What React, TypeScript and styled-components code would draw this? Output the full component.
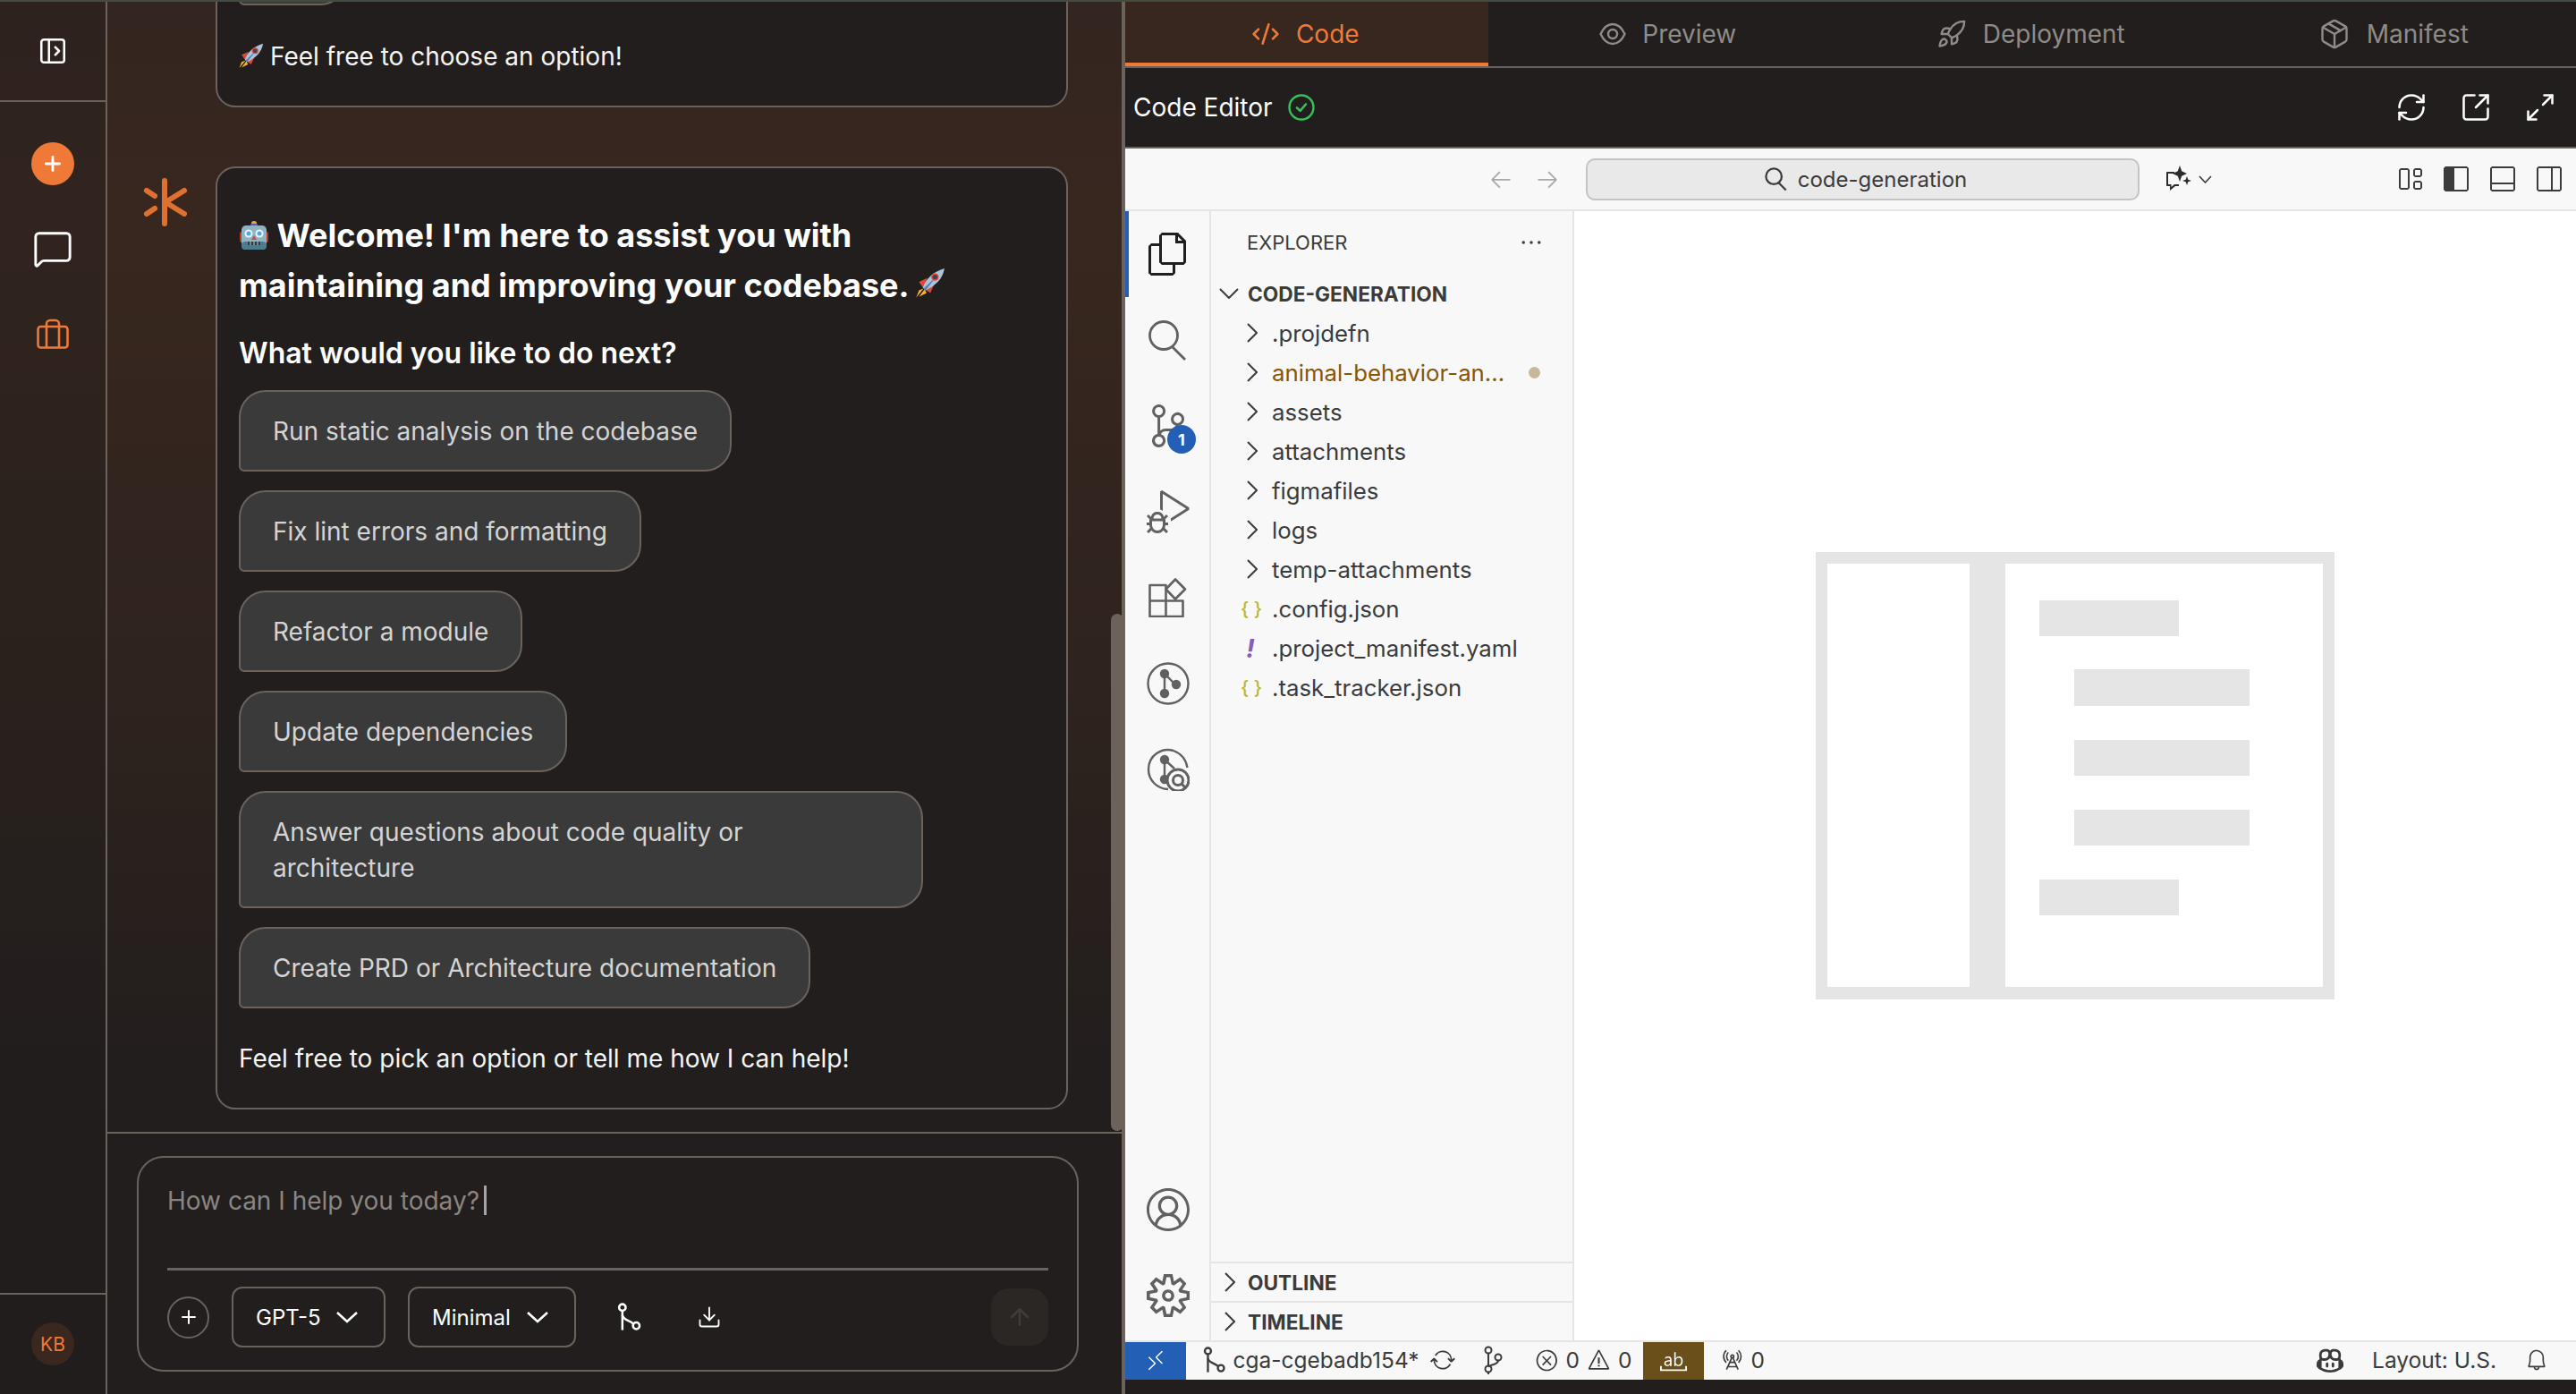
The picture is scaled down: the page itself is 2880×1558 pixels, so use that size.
import React from 'react'
import styled, { createGlobalStyle } from 'styled-components'
import {
  Download,
  Maximize2,
  MessageSquare,
  PanelLeftOpen,
  Plus,
  RefreshCw,
  Rocket,
  Package,
  CodeXml,
  SquareArrowOutUpRight,
  ArrowUp,
} from 'lucide-react'
import {
  VscAccount,
  VscArrowLeft,
  VscArrowRight,
  VscBell,
  VscCopilot,
  VscDebugAlt,
  VscEllipsis,
  VscError,
  VscFiles,
  VscLayout,
  VscLayoutPanelOff,
  VscLayoutSidebarLeft,
  VscLayoutSidebarRightOff,
  VscRadioTower,
  VscRemote,
  VscSettingsGear,
  VscSourceControl,
  VscSync,
  VscWarning,
  VscWholeWord,
} from 'react-icons/vsc'

const LINE = '#6b625c'
const DARK = '#211e1d'
const ORANGE = '#ef7a38'

const GlobalStyle = createGlobalStyle`
  html, body {
    margin: 0;
    padding: 0;
    background: ${DARK};
  }
  * {
    box-sizing: border-box;
  }
  body {
    font-family: Inter, "Liberation Sans", sans-serif;
  }
`

const Page = styled.div`
  width: 2880px;
  height: 1558px;
  display: flex;
  flex-direction: column;
  overflow: hidden;
  border-top: 2px solid #444c42;
`

const Body = styled.div`
  flex: 1;
  min-height: 0;
  display: flex;
  background: linear-gradient(180deg, #33251f 0%, #38271f 15%, #2e231e 50%, #251f1d 70%, ${DARK} 80%);
`

/* left rail */
const Rail = styled.nav`
  width: 120px;
  flex-shrink: 0;
  display: flex;
  flex-direction: column;
  border-right: 2px solid ${LINE};
  background: rgba(33, 30, 29, 0.3);
`

const RailTop = styled.div`
  height: 112px;
  flex-shrink: 0;
  display: flex;
  align-items: center;
  justify-content: center;
  border-bottom: 2px solid ${LINE};
  color: #fff;
`

const RailNav = styled.div`
  flex: 1;
  display: flex;
  flex-direction: column;
  align-items: center;
  padding-top: 21px;
  color: #fff;
`

const RailSlot = styled.div`
  height: 95px;
  flex-shrink: 0;
  display: flex;
  align-items: center;
  justify-content: center;
`

const NewButton = styled.div`
  width: 48px;
  height: 48px;
  border-radius: 50%;
  background: ${ORANGE};
  color: #fff;
  display: flex;
  align-items: center;
  justify-content: center;
`

const RailBottom = styled.div`
  height: 113px;
  flex-shrink: 0;
  display: flex;
  justify-content: center;
  padding-top: 31px;
  border-top: 2px solid ${LINE};
`

const Initials = styled.div`
  width: 48px;
  height: 48px;
  border-radius: 50%;
  background: #3a271e;
  color: ${ORANGE};
  font-size: 21px;
  display: flex;
  align-items: center;
  justify-content: center;
`

/* chat column */
const Chat = styled.section`
  width: 1138px;
  flex-shrink: 0;
  display: flex;
  flex-direction: column;
  border-right: 4px solid ${LINE};
  position: relative;
`

const Thumb = styled.div`
  position: absolute;
  right: -2px;
  top: 684px;
  width: 14px;
  height: 578px;
  border-radius: 7px;
  background: ${LINE};
`

const Messages = styled.div`
  height: 1263px;
  flex-shrink: 0;
  overflow: hidden;
  display: flex;
  flex-direction: column;
  justify-content: flex-end;
  gap: 66px;
  padding: 0 60px 25px 121px;
`

const Message = styled.article`
  position: relative;
  flex-shrink: 0;
  background: ${DARK};
  border: 2px solid ${LINE};
  border-radius: 22px;
  padding: 33px 24px;
  display: flex;
  flex-direction: column;
  align-items: flex-start;
`

const Spark = styled.svg`
  position: absolute;
  left: -83px;
  top: 10px;
  width: 52px;
  height: 56px;
`

const Heading = styled.h2`
  margin: 14px 0 26px;
  font-size: 36px;
  line-height: 56px;
  font-weight: 700;
  color: #fff;
`

const Question = styled.h3`
  margin: 0 0 19px;
  font-size: 32px;
  line-height: 44px;
  font-weight: 600;
  color: #fff;
`

const Plain = styled.p<{ $top?: number }>`
  margin: ${(p) => p.$top ?? 0}px 0 0;
  font-size: 28px;
  line-height: 44px;
  color: #f5f5f5;
  display: flex;
  align-items: center;
  gap: 7px;
`

const Emoji = styled.svg`
  vertical-align: -4px;
  flex-shrink: 0;
`

const LeadingEmoji = styled.span`
  display: flex;
  margin-left: -4px;
`

const TrailingEmoji = styled.span`
  margin-left: -5px;
`

const Options = styled.div`
  display: flex;
  flex-direction: column;
  align-items: flex-start;
  gap: 21px;
`

const Option = styled.button`
  display: block;
  max-width: 765px;
  min-height: 91px;
  padding: 23.5px 36px;
  border: 2px solid ${LINE};
  border-radius: 30px 30px 30px 6px;
  background: #3a3a3a;
  color: #d4d4d4;
  font-family: inherit;
  font-size: 28px;
  line-height: 40px;
  text-align: left;
`

const ClippedOption = styled(Option)`
  width: 121px;
  margin-bottom: 35px;
`

const Composer = styled.div`
  flex: 1;
  border-top: 2px solid ${LINE};
  padding: 25px 48px 0 33px;
`

const ComposerBox = styled.div`
  height: 241px;
  border: 2px solid ${LINE};
  border-radius: 30px;
  padding: 0 32px;
  display: flex;
  flex-direction: column;
`

const Prompt = styled.div`
  height: 126px;
  flex-shrink: 0;
  padding-top: 26px;
  border-bottom: 3px solid ${LINE};
  display: flex;
  align-items: flex-start;
  font-size: 28px;
  line-height: 44px;
  color: #8b8581;
`

const Caret = styled.span`
  width: 3px;
  height: 33px;
  margin: 5px 0 0 5px;
  background: #a5a5a5;
`

const ComposerBar = styled.div`
  flex: 1;
  display: flex;
  align-items: center;
  padding-bottom: 7px;
`

const RoundAdd = styled.div`
  width: 47px;
  height: 47px;
  border-radius: 50%;
  border: 2px solid ${LINE};
  color: #fff;
  display: flex;
  align-items: center;
  justify-content: center;
  margin-right: 25px;
`

const Picker = styled.div<{ $width: number }>`
  width: ${(p) => p.$width}px;
  height: 68px;
  border: 2px solid ${LINE};
  border-radius: 12px;
  display: flex;
  align-items: center;
  justify-content: space-between;
  padding: 0 28px 0 25px;
  margin-right: 25px;
  color: #fff;
  font-size: 24px;
`

const BarIcon = styled.div`
  width: 28px;
  height: 32px;
  color: #fff;
  margin: 0 40px 0 21px;
  display: flex;
  align-items: center;
  justify-content: center;
  flex-shrink: 0;
`

const Send = styled.div`
  margin-left: auto;
  width: 64px;
  height: 64px;
  border-radius: 20px;
  background: #2a2725;
  color: #3f3c3a;
  display: flex;
  align-items: center;
  justify-content: center;
`

/* right side */
const Workspace = styled.main`
  flex: 1;
  min-width: 0;
  display: flex;
  flex-direction: column;
  background: ${DARK};
`

const Tabs = styled.div`
  height: 74px;
  flex-shrink: 0;
  display: grid;
  grid-template-columns: repeat(4, 1fr);
  border-bottom: 2px solid ${LINE};
`

const Tab = styled.div<{ $active?: boolean }>`
  display: flex;
  align-items: center;
  justify-content: center;
  gap: 18px;
  font-size: 28px;
  padding: 4px 3px 0 0;
  color: ${(p) => (p.$active ? ORANGE : '#8f8b88')};
  background: ${(p) => (p.$active ? '#38271f' : 'transparent')};
  border-bottom: 4px solid ${(p) => (p.$active ? ORANGE : 'transparent')};
`

const EditorBar = styled.div`
  height: 90px;
  flex-shrink: 0;
  display: flex;
  align-items: center;
  gap: 17px;
  padding: 0 22px 0 9px;
  border-bottom: 2px solid ${LINE};
  color: #fff;
  font-size: 28px;
`

const EditorActions = styled.div`
  margin-left: auto;
  display: flex;
  align-items: center;
  gap: 36px;
`

const Ide = styled.div`
  height: 1376px;
  flex-shrink: 0;
  display: flex;
  flex-direction: column;
  background: #fff;
  color: #3b3b3b;
  font-size: 24.5px;
`

const TitleBar = styled.div`
  height: 70px;
  flex-shrink: 0;
  background: #f8f8f8;
  border-bottom: 2px solid #e5e5e5;
  display: flex;
  align-items: center;
  color: #a8a8a8;
  padding-left: 406px;
`

const NavArrows = styled.div`
  display: flex;
  gap: 24px;
  margin-right: 29px;
`

const CommandCenter = styled.div`
  width: 619px;
  height: 47px;
  background: #e9e9e9;
  border: 2px solid #c4c4c4;
  border-radius: 10px;
  padding-left: 7px;
  display: flex;
  align-items: center;
  justify-content: center;
  gap: 11px;
  color: #3b3b3b;
  font-size: 24px;
`

const CopilotMenu = styled.div`
  display: flex;
  align-items: center;
  gap: 8px;
  margin-left: 28px;
  color: #3b3b3b;
`

const LayoutIcons = styled.div`
  display: flex;
  margin-left: auto;
  margin-right: 14px;
  gap: 20px;
  color: #3b3b3b;
`

const IdeBody = styled.div`
  flex: 1;
  min-height: 0;
  display: flex;
`

const Activity = styled.div`
  width: 96px;
  flex-shrink: 0;
  background: #f8f8f8;
  border-right: 2px solid #e5e5e5;
  display: flex;
  flex-direction: column;
  color: #616161;
`

const ActivityItem = styled.div<{ $active?: boolean }>`
  position: relative;
  height: 96px;
  flex-shrink: 0;
  display: flex;
  align-items: center;
  justify-content: center;
  padding-right: 2px;
  color: ${(p) => (p.$active ? '#1f1f1f' : '#616161')};
  border-left: 4px solid ${(p) => (p.$active ? '#2360b5' : 'transparent')};
`

const ActivityFooter = styled.div`
  margin-top: auto;
  padding-bottom: 2px;
`

const Badge = styled.span`
  position: absolute;
  left: 43px;
  top: 47px;
  width: 32px;
  height: 32px;
  border-radius: 50%;
  background: #2360b5;
  color: #fff;
  font-size: 18px;
  font-weight: 700;
  display: flex;
  align-items: center;
  justify-content: center;
`

const Explorer = styled.aside`
  width: 406px;
  flex-shrink: 0;
  background: #f8f8f8;
  border-right: 2px solid #e5e5e5;
  display: flex;
  flex-direction: column;
`

const ExplorerHead = styled.div`
  height: 70px;
  flex-shrink: 0;
  display: flex;
  align-items: center;
  justify-content: space-between;
  padding: 0 32px 0 40px;
  font-size: 22px;
`

const Section = styled.div`
  height: 44px;
  flex-shrink: 0;
  display: flex;
  align-items: center;
  padding-left: 9px;
  gap: 10px;
  font-size: 22.7px;
  font-weight: 700;
`

const Tree = styled.div`
  flex: 1;
  min-height: 0;
`

const TreeRow = styled.div<{ $changed?: boolean }>`
  height: 44px;
  display: flex;
  align-items: center;
  padding-left: 32px;
  gap: 8px;
  font-size: 25.8px;
  color: ${(p) => (p.$changed ? '#895503' : '#3b3b3b')};
`

const RowMark = styled.span`
  width: 28px;
  flex-shrink: 0;
  display: flex;
  align-items: center;
  justify-content: center;
`

const FileMark = styled(RowMark)`
  justify-content: flex-start;
  padding-left: 1px;
`

const Curly = styled.span`
  font-size: 21px;
  font-weight: 500;
  color: #b7b73b;
  white-space: nowrap;
`

const Bang = styled.span`
  margin-left: 6px;
  font-size: 29px;
  font-style: italic;
  font-weight: 700;
  color: #8a5db8;
`

const ChangeDot = styled.span`
  width: 13px;
  height: 13px;
  border-radius: 50%;
  background: #c9b79c;
  margin-left: auto;
  margin-right: 36px;
`

const Collapsed = styled(Section)`
  border-top: 2px solid #e5e5e5;
  gap: 14px;
  padding-left: 15px;
`

const EditorArea = styled.div`
  flex: 1;
  background: #fff;
  display: flex;
  align-items: center;
  justify-content: center;
`

const StatusBar = styled.div`
  height: 44px;
  flex-shrink: 0;
  display: flex;
  background: #f8f8f8;
  border-top: 2px solid #e5e5e5;
`

const RemoteTag = styled.div`
  width: 68px;
  flex-shrink: 0;
  background: #2360b5;
  color: #fff;
  display: flex;
  align-items: center;
  justify-content: center;
`

const StatusItem = styled.div<{ $left: number; $gap?: number }>`
  margin-left: ${(p) => p.$left}px;
  padding-bottom: 2px;
  display: flex;
  align-items: center;
  gap: ${(p) => p.$gap ?? 8}px;
`

const SyncMark = styled.span`
  display: flex;
  margin-left: 4px;
`

const WordTag = styled.div`
  width: 68px;
  margin-left: 13px;
  background: #6b4f1a;
  color: #fff;
  display: flex;
  align-items: center;
  justify-content: center;
`

const StatusRight = styled.div`
  margin-left: auto;
  padding-bottom: 2px;
  display: flex;
  align-items: center;
  gap: 32px;
  padding-right: 31px;
`

const folders = ['.projdefn', 'animal-behavior-an...', 'assets', 'attachments', 'figmafiles', 'logs', 'temp-attachments']

const options = [
  'Run static analysis on the codebase',
  'Fix lint errors and formatting',
  'Refactor a module',
  'Update dependencies',
  'Answer questions about code quality or architecture',
  'Create PRD or Architecture documentation',
]

const RocketEmoji = ({ size }: { size: number }) => (
  <Emoji width={size} height={size} viewBox="0 0 36 36">
    <path d="M8 16 L17 12 L12 22 Z" fill="#dd4a32" />
    <path d="M20 28 L24 19 L14 24 Z" fill="#dd4a32" />
    <path d="M13 23 L5 33 L8 25 Z M14 24 L8 32 L16 28 Z" fill="#f5b52e" />
    <path d="M12 22 C16 12 24 5 35 2 C33 13 26 20 15 25 Z" fill="#a9c4de" />
    <path d="M13 23 L27 10 L15 25 Z" fill="#5b7fb0" />
    <circle cx="25" cy="11" r="4" fill="#dd4a32" />
    <circle cx="25" cy="11" r="2.5" fill="#38465a" />
  </Emoji>
)

const RobotEmoji = () => (
  <Emoji width={34} height={34} viewBox="0 0 34 34">
    <rect x="14" y="1" width="6" height="5" rx="2.5" fill="#e3a934" />
    <rect x="13" y="4" width="8" height="3" rx="1" fill="#6d53a8" />
    <rect x="1" y="13" width="4" height="12" rx="2" fill="#b5362f" />
    <rect x="29" y="13" width="4" height="12" rx="2" fill="#b5362f" />
    <rect x="3" y="6" width="28" height="27" rx="5" fill="#8db4c0" />
    <rect x="3" y="24" width="28" height="9" rx="4" fill="#4e7c8c" />
    <circle cx="11" cy="15" r="4.5" fill="#e6f4fa" />
    <circle cx="23" cy="15" r="4.5" fill="#e6f4fa" />
    <circle cx="11" cy="15" r="2.5" fill="#5aa7d6" />
    <circle cx="23" cy="15" r="2.5" fill="#5aa7d6" />
    <path d="M17 17 L20 22 L14 22 Z" fill="#cf4a3f" />
    <rect x="10" y="24" width="14" height="4" rx="1" fill="#2d3a3f" />
    <path d="M13 24v4M17 24v4M21 24v4" stroke="#c8d4d8" strokeWidth="1" />
  </Emoji>
)

const SparkLogo = () => (
  <Spark viewBox="0 0 52 56" fill="none" stroke="#de7030" strokeWidth="6" strokeLinecap="round">
    <path d="M24 4 V52" />
    <path d="M25 28 L46 15" />
    <path d="M25 28 L46 41" />
    <path d="M4 15 L13 21" />
    <path d="M4 41 L13 35" />
  </Spark>
)

const Briefcase = () => (
  <svg width="36" height="34" viewBox="0 0 36 34" fill="none" stroke={ORANGE} strokeWidth="2.6" strokeLinejoin="round">
    <rect x="1.5" y="9" width="33" height="23.5" rx="3" />
    <path d="M11 32V6a4 4 0 0 1 4-4h6a4 4 0 0 1 4 4v26" />
  </svg>
)

const EyeRing = () => (
  <svg width="30" height="26" viewBox="0 0 30 26" fill="none" stroke="#8f8b88" strokeWidth="2.4">
    <path d="M1.5 13C5 5.5 10 2 15 2s10 3.500 13.500 11C25 20.500 20 24 15 24S5 20.500 1.500 13Z" />
    <circle cx="15" cy="13" r="5" />
  </svg>
)

const SavedCheck = () => (
  <svg width="30" height="30" viewBox="0 0 30 30" fill="none" stroke="#35c15b">
    <circle cx="15" cy="15" r="13.5" strokeWidth="2.4" />
    <path d="M10 15.5l3.600 3.400L20 11.500" strokeWidth="2.600" strokeLinecap="round" strokeLinejoin="round" />
  </svg>
)

const ChatSparkle = () => (
  <svg width="30" height="30" viewBox="0 0 30 30" fill="#2b2b2b">
    <path d="M11 7H3a1 1 0 0 0-1 1v14a1 1 0 0 0 1 1h3v5l6-5h4v-2h-5l-3.500 3v-3H4V9h7Z" />
    <path d="M17 0l2.200 6.300L25 9l-5.800 2.700L17 18l-2.200-6.300L9 9l5.800-2.700Z" />
    <path d="M25 12l1.300 3.700L30 17l-3.700 1.300L25 22l-1.300-3.700L20 17l3.700-1.300Z" />
  </svg>
)

const Glass = ({ size }: { size: number }) => (
  <svg width={size} height={size} viewBox="0 0 46 46" fill="none" stroke="currentColor" strokeWidth={size > 30 ? 2.8 : 4}>
    <circle cx="18" cy="18" r="15.500" />
    <path d="M28 31 L42 45" />
  </svg>
)

const ExtensionBlocks = () => (
  <svg width="44" height="44" viewBox="0 0 44 44" fill="none" stroke="currentColor" strokeWidth="2.600" strokeLinejoin="round">
    <path d="M1.500 8H19.500V43H1.500Z" />
    <path d="M1.500 25.500H38.500V43H19.500" />
    <path d="M30 1.500L41 12.500L30 23.500L19.500 12.500Z" />
  </svg>
)

const Chevron = ({ down }: { down?: boolean }) => (
  <svg
    width={down ? 22 : 12}
    height={down ? 12 : 22}
    viewBox={down ? '0 0 22 12' : '0 0 12 22'}
    fill="none"
    stroke="#3b3b3b"
    strokeWidth="2"
  >
    <path d={down ? 'M1 1L11 11L21 1' : 'M1 1L11 11L1 21'} />
  </svg>
)

const PickerChevron = () => (
  <svg width="26" height="14" viewBox="0 0 26 14" fill="none" stroke="#fff" strokeWidth="2.600">
    <path d="M2 2L13 12L24 2" />
  </svg>
)

const PullRequests = () => (
  <svg width="48" height="48" viewBox="0 0 48 48" fill="none" stroke="#616161" strokeWidth="2.400">
    <circle cx="24" cy="24" r="22.500" />
    <path d="M20 13v22M20 13l11 11" />
    <circle cx="20" cy="13" r="4" fill="#616161" />
    <circle cx="20" cy="35" r="4" fill="#616161" />
    <circle cx="33" cy="25" r="4" fill="#616161" />
  </svg>
)

const GitLens = () => (
  <svg width="48" height="48" viewBox="0 0 48 48" fill="none" stroke="#616161" strokeWidth="2.400">
    <path d="M30 3C17 -1 2 8 2 24c0 12 10 22 22 22" />
    <path d="M30 3c8 3 14 10 15.500 19" />
    <path d="M20 13v22M20 13l11 10" />
    <circle cx="20" cy="13" r="4" fill="#616161" />
    <circle cx="20" cy="35" r="4" fill="#616161" />
    <circle cx="35" cy="36" r="12" fill="#f8f8f8" stroke="#616161" strokeWidth="3" />
    <circle cx="35" cy="36" r="5.500" strokeWidth="3" />
    <path d="M39 40l5 5" strokeWidth="3" />
  </svg>
)

const BranchTrail = ({ color, size }: { color: string; size: number }) => (
  <svg width={size * 0.85} height={size} viewBox="0 0 28 32" fill="none" stroke={color} strokeWidth="2.600">
    <circle cx="6" cy="5" r="3.800" />
    <path d="M6 9v22" />
    <path d="M6 14c1 6 8 5 13 10" />
    <circle cx="22" cy="26" r="3.800" />
  </svg>
)

const GraphStatus = () => (
  <svg width="24" height="32" viewBox="0 0 24 32" fill="none" stroke="#3b3b3b" strokeWidth="2">
    <circle cx="7" cy="5" r="3.500" />
    <path d="M7 8.500v14" />
    <circle cx="7" cy="26" r="3.500" />
    <circle cx="18" cy="13" r="3.500" />
    <path d="M18 16.500c0 5-8 4-11 7M7 30v2" />
  </svg>
)

const Watermark = () => (
  <svg width="580" height="500" viewBox="0 0 580 500" fill="#e5e5e5">
    <path fillRule="evenodd" d="M0 0H580V500H0Z M13 13V486H172V13Z M212 13V486H567V13Z" />
    <rect x="250" y="54" width="156" height="40" />
    <rect x="289" y="131" width="196" height="41" />
    <rect x="289" y="210" width="196" height="40" />
    <rect x="289" y="288" width="196" height="40" />
    <rect x="250" y="366" width="156" height="40" />
  </svg>
)

export default function App() {
  return (
    <Page>
      <GlobalStyle />
      <Body>
        <Rail>
          <RailTop>
            <PanelLeftOpen size={34} strokeWidth={1.8} />
          </RailTop>
          <RailNav>
            <RailSlot>
              <NewButton>
                <Plus size={26} strokeWidth={2.6} />
              </NewButton>
            </RailSlot>
            <RailSlot>
              <MessageSquare size={46} strokeWidth={1.5} />
            </RailSlot>
            <RailSlot>
              <Briefcase />
            </RailSlot>
          </RailNav>
          <RailBottom>
            <Initials>KB</Initials>
          </RailBottom>
        </Rail>

        <Chat>
          <Messages>
            <Message>
              <ClippedOption />
              <Plain>
                <LeadingEmoji>
                  <RocketEmoji size={32} />
                </LeadingEmoji>
                Feel free to choose an option!
              </Plain>
            </Message>
            <Message>
              <SparkLogo />
              <Heading>
                <RobotEmoji /> Welcome! I'm here to assist you with
                <br />
                maintaining and improving your codebase.{' '}
                <TrailingEmoji>
                  <RocketEmoji size={38} />
                </TrailingEmoji>
              </Heading>
              <Question>What would you like to do next?</Question>
              <Options>
                {options.map((o) => (
                  <Option key={o}>{o}</Option>
                ))}
              </Options>
              <Plain $top={34}>Feel free to pick an option or tell me how I can help!</Plain>
            </Message>
          </Messages>
          <Thumb />
          <Composer>
            <ComposerBox>
              <Prompt>
                How can I help you today?
                <Caret />
              </Prompt>
              <ComposerBar>
                <RoundAdd>
                  <Plus size={24} strokeWidth={2} />
                </RoundAdd>
                <Picker $width={172}>
                  GPT-5
                  <PickerChevron />
                </Picker>
                <Picker $width={188}>
                  Minimal
                  <PickerChevron />
                </Picker>
                <BarIcon>
                  <BranchTrail color="#fff" size={32} />
                </BarIcon>
                <BarIcon>
                  <Download size={40} strokeWidth={1.6} />
                </BarIcon>
                <Send>
                  <ArrowUp size={30} strokeWidth={2} />
                </Send>
              </ComposerBar>
            </ComposerBox>
          </Composer>
        </Chat>

        <Workspace>
          <Tabs>
            <Tab $active>
              <CodeXml size={32} strokeWidth={2} />
              Code
            </Tab>
            <Tab>
              <EyeRing />
              Preview
            </Tab>
            <Tab>
              <Rocket size={34} strokeWidth={1.7} />
              Deployment
            </Tab>
            <Tab>
              <Package size={36} strokeWidth={1.6} />
              Manifest
            </Tab>
          </Tabs>
          <EditorBar>
            Code Editor
            <SavedCheck />
            <EditorActions>
              <RefreshCw size={36} strokeWidth={1.7} />
              <SquareArrowOutUpRight size={36} strokeWidth={1.7} />
              <Maximize2 size={36} strokeWidth={1.7} />
            </EditorActions>
          </EditorBar>
          <Ide>
            <TitleBar>
              <NavArrows>
                <VscArrowLeft size={28} />
                <VscArrowRight size={28} />
              </NavArrows>
              <CommandCenter>
                <Glass size={26} />
                code-generation
              </CommandCenter>
              <CopilotMenu>
                <ChatSparkle />
                <svg width="15" height="9" viewBox="0 0 15 9" fill="none" stroke="#3b3b3b" strokeWidth="1.600">
                  <path d="M1 1L7.500 8L14 1" />
                </svg>
              </CopilotMenu>
              <LayoutIcons>
                <VscLayout size={32} />
                <VscLayoutSidebarLeft size={32} />
                <VscLayoutPanelOff size={32} />
                <VscLayoutSidebarRightOff size={32} />
              </LayoutIcons>
            </TitleBar>
            <IdeBody>
              <Activity>
                <ActivityItem $active>
                  <VscFiles size={48} />
                </ActivityItem>
                <ActivityItem>
                  <Glass size={46} />
                </ActivityItem>
                <ActivityItem>
                  <VscSourceControl size={48} />
                  <Badge>1</Badge>
                </ActivityItem>
                <ActivityItem>
                  <VscDebugAlt size={48} />
                </ActivityItem>
                <ActivityItem>
                  <ExtensionBlocks />
                </ActivityItem>
                <ActivityItem>
                  <PullRequests />
                </ActivityItem>
                <ActivityItem>
                  <GitLens />
                </ActivityItem>
                <ActivityFooter>
                  <ActivityItem>
                    <VscAccount size={48} />
                  </ActivityItem>
                  <ActivityItem>
                    <VscSettingsGear size={48} />
                  </ActivityItem>
                </ActivityFooter>
              </Activity>
              <Explorer>
                <ExplorerHead>
                  EXPLORER
                  <VscEllipsis size={28} />
                </ExplorerHead>
                <Section>
                  <Chevron down />
                  CODE-GENERATION
                </Section>
                <Tree>
                  {folders.map((f, i) => (
                    <TreeRow key={f} $changed={i === 1}>
                      <RowMark>
                        <Chevron />
                      </RowMark>
                      {f}
                      {i === 1 && <ChangeDot />}
                    </TreeRow>
                  ))}
                  <TreeRow>
                    <FileMark>
                      <Curly>{'{ }'}</Curly>
                    </FileMark>
                    .config.json
                  </TreeRow>
                  <TreeRow>
                    <FileMark>
                      <Bang>!</Bang>
                    </FileMark>
                    .project_manifest.yaml
                  </TreeRow>
                  <TreeRow>
                    <FileMark>
                      <Curly>{'{ }'}</Curly>
                    </FileMark>
                    .task_tracker.json
                  </TreeRow>
                </Tree>
                <Collapsed>
                  <Chevron />
                  OUTLINE
                </Collapsed>
                <Collapsed>
                  <Chevron />
                  TIMELINE
                </Collapsed>
              </Explorer>
              <EditorArea>
                <Watermark />
              </EditorArea>
            </IdeBody>
            <StatusBar>
              <RemoteTag>
                <VscRemote size={26} />
              </RemoteTag>
              <StatusItem $left={19}>
                <BranchTrail color="#3b3b3b" size={30} />
                cga-cgebadb154*
                <SyncMark>
                  <VscSync size={28} />
                </SyncMark>
              </StatusItem>
              <StatusItem $left={30}>
                <GraphStatus />
              </StatusItem>
              <StatusItem $left={35} $gap={8}>
                <VscError size={27} />0
                <VscWarning size={27} />0
              </StatusItem>
              <WordTag>
                <VscWholeWord size={30} />
              </WordTag>
              <StatusItem $left={18}>
                <VscRadioTower size={26} />0
              </StatusItem>
              <StatusRight>
                <VscCopilot size={30} />
                Layout: U.S.
                <VscBell size={26} />
              </StatusRight>
            </StatusBar>
          </Ide>
        </Workspace>
      </Body>
    </Page>
  )
}
